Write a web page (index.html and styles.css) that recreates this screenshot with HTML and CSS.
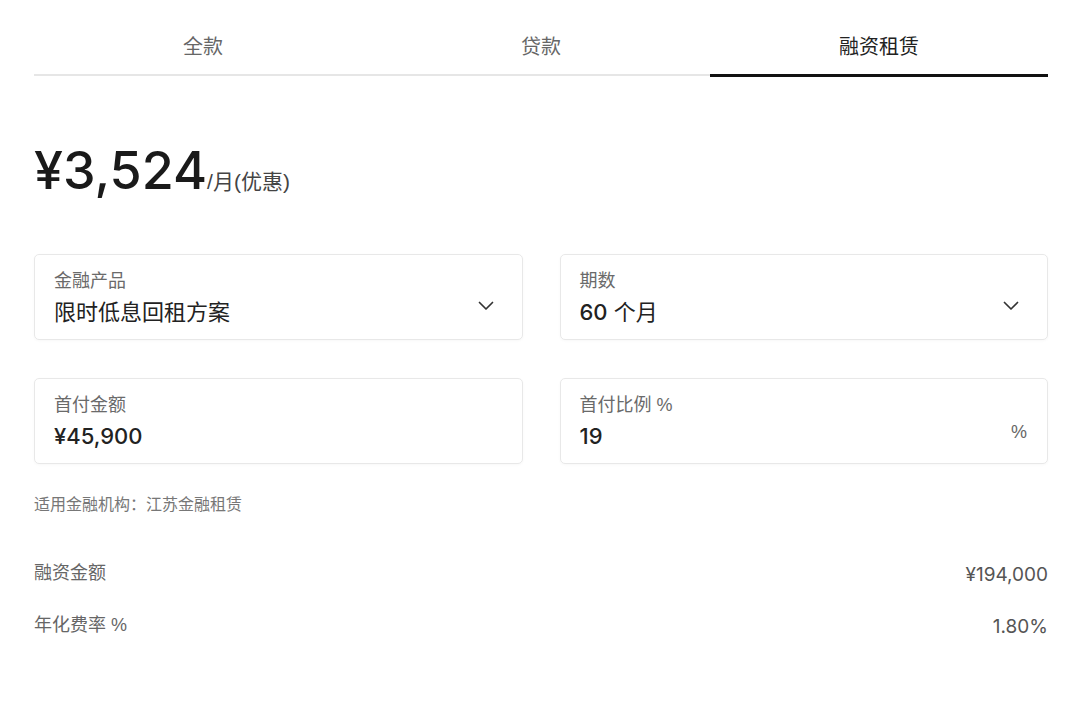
FILE: index.html
```html
<!DOCTYPE html>
<html lang="zh-CN">
<head>
<meta charset="UTF-8">
<meta name="viewport" content="width=device-width, initial-scale=1.0">
<title>融资租赁</title>
<link rel="stylesheet" href="styles.css">
</head>
<body>
<div class="page">

  <div class="tabs">
    <div class="tab">全款</div>
    <div class="tab">贷款</div>
    <div class="tab active">融资租赁</div>
  </div>

  <div class="price">
    <span class="amount">¥3,524</span><span class="unit">/月(优惠)</span>
  </div>

  <div class="fields">
    <div class="field">
      <div class="field-text">
        <div class="label">金融产品</div>
        <div class="value">限时低息回租方案</div>
      </div>
      <svg class="chevron" width="16" height="10" viewBox="0 0 16 10"><path d="M1.5 1.5 L8 8 L14.5 1.5" fill="none" stroke="#333" stroke-width="1.7" stroke-linecap="round" stroke-linejoin="round"/></svg>
    </div>
    <div class="field">
      <div class="field-text">
        <div class="label">期数</div>
        <div class="value"><span class="num">60</span> 个月</div>
      </div>
      <svg class="chevron" width="16" height="10" viewBox="0 0 16 10"><path d="M1.5 1.5 L8 8 L14.5 1.5" fill="none" stroke="#333" stroke-width="1.7" stroke-linecap="round" stroke-linejoin="round"/></svg>
    </div>
    <div class="field">
      <div class="field-text">
        <div class="label">首付金额</div>
        <div class="value"><span class="num">¥45,900</span></div>
      </div>
    </div>
    <div class="field">
      <div class="field-text">
        <div class="label">首付比例 %</div>
        <div class="value"><span class="num">19</span></div>
      </div>
      <span class="suffix">%</span>
    </div>
  </div>

  <p class="note">适用金融机构：江苏金融租赁</p>

  <div class="row">
    <span class="row-label">融资金额</span>
    <span class="row-value">¥194,000</span>
  </div>
  <div class="row">
    <span class="row-label">年化费率 %</span>
    <span class="row-value">1.80%</span>
  </div>

</div>
</body>
</html>
```

FILE: styles.css
```css
body {
  margin: 0;
  font-family: "Liberation Sans", "Noto Sans CJK SC", sans-serif;
  color: #222;
  background-color: #fff;
}
.page {
  padding: 0 32px 0 34px;
}

/* tabs */
.tabs {
  display: flex;
  align-items: flex-end;
}
.tab {
  flex: 1;
  text-align: center;
  font-size: 20px;
  line-height: 28px;
  color: #666;
  padding: 33px 0 13px;
  border-bottom: 2px solid #e6e6e6;
}
.tab.active {
  color: #222;
  border-bottom: 3px solid #111;
  margin-bottom: -1px;
}

/* price */
.price {
  margin-top: 68px;
  line-height: 54px;
  height: 54px;
}
.amount {
  font-family: Inter, "Liberation Sans", sans-serif;
  font-size: 52px;
  font-weight: 500;
  color: #1a1a1a;
}
.unit {
  font-size: 21px;
  color: #444;
}

/* form fields */
.fields {
  display: grid;
  grid-template-columns: 1fr 1fr;
  column-gap: 37px;
  row-gap: 38px;
  margin-top: 56px;
}
.field {
  display: flex;
  align-items: center;
  justify-content: space-between;
  height: 86px;
  box-sizing: border-box;
  padding: 0 28px 0 19px;
  border: 1px solid #e8e8e8;
  border-radius: 5px;
  box-shadow: 0 1px 3px rgba(0, 0, 0, 0.03);
}
.field-text {
  padding-top: 2px;
}
.label {
  font-size: 18px;
  line-height: 24px;
  color: #6a6a6a;
}
.value {
  font-family: Inter, "Noto Sans CJK SC", sans-serif;
  font-size: 22px;
  line-height: 30px;
  margin-top: 4px;
  color: #222;
}
.num {
  font-weight: 500;
}
.chevron {
  margin-top: 18px;
}
.suffix {
  margin-top: 22px;
  margin-right: -8px;
  font-size: 18px;
  color: #666;
}

/* summary */
.note {
  margin: 30px 0 0;
  font-size: 16px;
  line-height: 22px;
  color: #777;
}
.row {
  display: flex;
  justify-content: space-between;
  align-items: baseline;
  font-size: 18px;
  line-height: 26px;
  color: #666;
}
.note + .row {
  margin-top: 44px;
}
.row + .row {
  margin-top: 26px;
}
.row-value {
  font-family: Inter, "Liberation Sans", sans-serif;
  font-size: 19px;
  color: #555;
  position: relative;
  top: 2px;
}
```
